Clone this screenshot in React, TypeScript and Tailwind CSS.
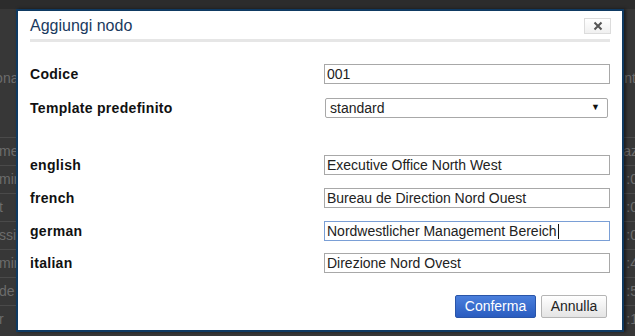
import React from "react";

const bgRows = [
  { l: "me", r: "az" },
  { l: "min", r: ":0" },
  { l: "t", r: ":0" },
  { l: "ssi", r: ":0" },
  { l: "min", r: ":4" },
  { l: "de", r: ":5" },
  { l: "r", r: ":1" },
];

function Field({ label, value, focused }: { label: string; value: string; focused?: boolean }) {
  return (
    <div className="flex items-center h-[20px]">
      <div className="w-[295px] text-[14px] tracking-[0.3px] font-bold text-[#111]">{label}</div>
      <div
        className={`w-[287px] h-[20px] flex items-center pl-[2px] text-[14px] text-[#222] bg-white border ${
          focused ? "border-[#7a9fd6]" : "border-[#a8a8a8]"
        }`}
      >
        <span className="whitespace-nowrap">{value}</span>
        {focused && <span className="w-px h-[15px] bg-[#111] ml-px" />}
      </div>
    </div>
  );
}

export default function App() {
  return (
    <div
      className="relative w-[635px] h-[336px] overflow-hidden bg-[#373737] text-[13px]"
      style={{ fontFamily: '"Liberation Sans", Arial, sans-serif' }}
    >
      {/* background page */}
      <div className="flex flex-col">
        <div className="h-[9px] bg-[#2c2c2c]" />
        <div className="h-[57px]" />
        <div className="h-[24px] flex justify-between items-center text-[#6c6c6c] text-[14px]">
          <span className="-ml-[8px]">iona</span>
          <span className="mr-[-4px]">nti</span>
        </div>
        <div className="h-[47px]" />
        {bgRows.map((r, i) => (
          <div
            key={i}
            className="h-[28px] flex justify-between items-center border-t border-[#4a4a4a] text-[#6c6c6c] text-[14px]"
          >
            <span className="-ml-[1px]">{r.l}</span>
            <span className="mr-[-3px]">{r.r}</span>
          </div>
        ))}
      </div>

      {/* dialog */}
      <div className="absolute left-[16px] top-[9px] w-[608px] h-[323px] bg-white border-[2px] border-[#0f3a62] shadow-[2px_0_3px_rgba(0,0,0,0.5)] flex flex-col">
        <div className="mx-[12px] h-[31px] flex items-center justify-between border-b-[3px] border-[#e6e6e6]">
          <span className="text-[16px] text-[#1a3a5e] mt-[1px]">Aggiungi nodo</span>
          <div className="w-[27px] h-[16px] mt-[2px] mr-[-1px] border border-[#dcdcdc] bg-gradient-to-b from-white to-[#f0f0f0] flex items-center justify-center">
            <svg width="10" height="10" viewBox="0 0 10 10">
              <path d="M1.5 1.5 L8.5 8.5 M8.5 1.5 L1.5 8.5" stroke="#555" strokeWidth="2" />
            </svg>
          </div>
        </div>
        <div className="mx-[12px] mt-[22px] flex flex-col">
          <Field label="Codice" value="001" />
          <div className="flex items-center h-[20px] mt-[14px]">
            <div className="w-[295px] text-[14px] tracking-[0.3px] font-bold text-[#111]">Template predefinito</div>
            <div className="w-[283px] h-[20px] flex items-center justify-between pl-[4px] pr-[7px] text-[14px] text-[#222] bg-white border border-[#a8a8a8] rounded-[2px]">
              <span>standard</span>
              <span className="text-[9px] text-[#111]">▼</span>
            </div>
          </div>
          <div className="h-[37px]" />
          <div className="flex flex-col gap-[13px]">
            <Field label="english" value="Executive Office North West" />
            <Field label="french" value="Bureau de Direction Nord Ouest" />
            <Field label="german" value="Nordwestlicher Management Bereich" focused />
            <div className="-mt-px">
              <Field label="italian" value="Direzione Nord Ovest" />
            </div>
          </div>
          <div className="flex justify-end gap-[5px] mt-[22px] mr-[3px]">
            <button className="w-[81px] h-[23px] rounded-[2px] border border-[#2a55a8] bg-gradient-to-b from-[#4a7fdc] to-[#2a5cc0] text-white text-[14px]">
              Conferma
            </button>
            <button className="w-[66px] h-[23px] rounded-[2px] border border-[#b5b5b5] bg-gradient-to-b from-white to-[#e4e4e4] text-[#222] text-[14px]">
              Annulla
            </button>
          </div>
        </div>
      </div>
    </div>
  );
}
